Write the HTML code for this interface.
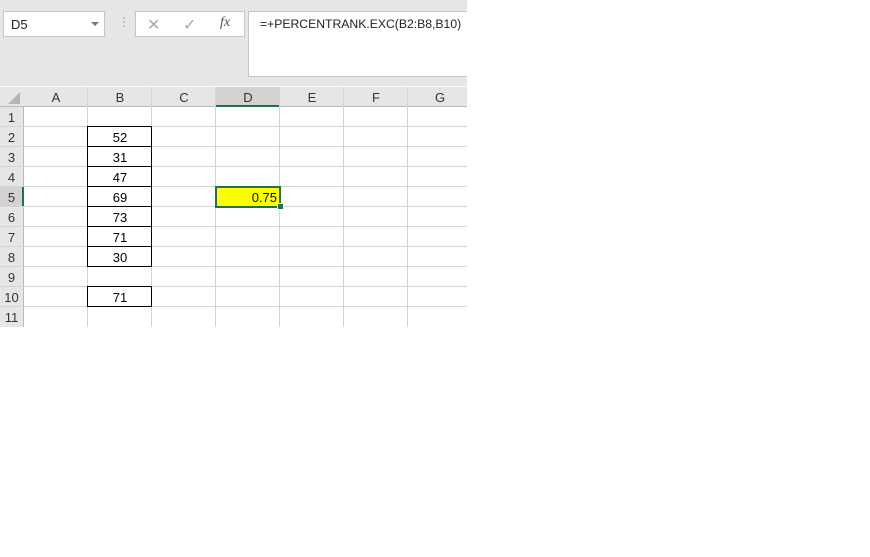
<!DOCTYPE html>
<html><head><style>
body{margin:0;width:870px;height:557px;background:#fff;position:relative;overflow:hidden;font-family:"Liberation Sans",sans-serif;}
#wrap{position:absolute;left:0;top:0;width:467px;height:327px;overflow:hidden;}
.top{position:absolute;left:0;top:0;width:467px;height:86px;background:#e6e6e6;}
.box{position:absolute;background:#fff;border:1px solid #c6c6c6;box-sizing:border-box;}
.t{position:absolute;font-size:13px;color:#222;}
.hdr{position:absolute;background:#e6e6e6;box-sizing:border-box;font-size:13px;color:#333;text-align:center;}
.v{position:absolute;background:#d4d4d4;width:1px;}
.h{position:absolute;background:#d4d4d4;height:1px;}
.c{position:absolute;font-size:13px;text-align:center;color:#000;}
</style></head><body>
<div id="wrap">
<div class="top"></div>
<div class="box" style="left:3px;top:11px;width:102px;height:26px"></div>
<div class="t" style="left:11px;top:17px">D5</div>
<div style="position:absolute;left:91px;top:22px;width:0;height:0;border-left:4px solid transparent;border-right:4px solid transparent;border-top:4px solid #777"></div>
<div class="t" style="left:118px;top:15px;color:#999;font-size:12px">⋮</div>
<div class="box" style="left:135px;top:11px;width:110px;height:26px"></div>
<div class="t" style="left:147px;top:15px;color:#aaa;font-size:16px">✕</div>
<div class="t" style="left:183px;top:15px;color:#aaa;font-size:16px">✓</div>
<div class="t" style="left:220px;top:15px;color:#555;font-family:'Liberation Serif',serif;font-style:italic;font-size:14px">fx</div>
<div class="box" style="left:248px;top:11px;width:230px;height:66px"></div>
<div class="t" style="left:260px;top:17px;font-size:12.2px">=+PERCENTRANK.EXC(B2:B8,B10)</div>

<div class="hdr" style="left:0;top:87px;width:467px;height:20px;border-bottom:1px solid #bbb"></div>
<div class="hdr" style="left:0;top:107px;width:24px;height:220px;border-right:1px solid #bbb"></div>
<div style="position:absolute;left:8px;top:92px;width:0;height:0;border-left:12px solid transparent;border-bottom:12px solid #b5b5b5"></div>
<div class="hdr" style="left:216px;top:87px;width:64px;height:20px;background:#d2d2d2;border-bottom:2px solid #217346"></div>
<div class="hdr" style="left:0;top:187px;width:24px;height:20px;background:#d2d2d2;border-right:2px solid #217346"></div>

<div id="g"></div>
<div style="position:absolute;left:215px;top:186px;width:62px;height:18px;background:#ffff00;border:2px solid #217346"></div>
<div class="c" style="left:216px;top:190px;width:61px;text-align:right">0.75</div>
<div style="position:absolute;left:277px;top:203px;width:5px;height:5px;background:#217346;border:1px solid #fff"></div>
</div>
<script>
var g=document.getElementById('g'),s='';
var cols=['A','B','C','D','E','F','G'];
for(var i=0;i<7;i++){var x=24+i*64;
s+='<div class="c" style="left:'+x+'px;top:90px;width:64px;color:#333">'+cols[i]+'</div>';
s+='<div class="v" style="left:'+(x+63)+'px;top:87px;height:240px"></div>';}
for(var r=1;r<=11;r++){var y=107+(r-1)*20;
s+='<div class="c" style="left:0;top:'+(y+3)+'px;width:23px;color:#333">'+r+'</div>';
if(r<11)s+='<div class="h" style="left:0;top:'+(y+19)+'px;width:467px"></div>';}
var vals={2:52,3:31,4:47,5:69,6:73,7:71,8:30,10:71};
for(var k in vals){var y=107+(k-1)*20;
s+='<div style="position:absolute;left:87px;top:'+(y-1)+'px;width:63px;height:19px;border:1px solid #000"></div>';
s+='<div class="c" style="left:88px;top:'+(y+3)+'px;width:64px">'+vals[k]+'</div>';}
g.innerHTML=s;
</script>
</body></html>
